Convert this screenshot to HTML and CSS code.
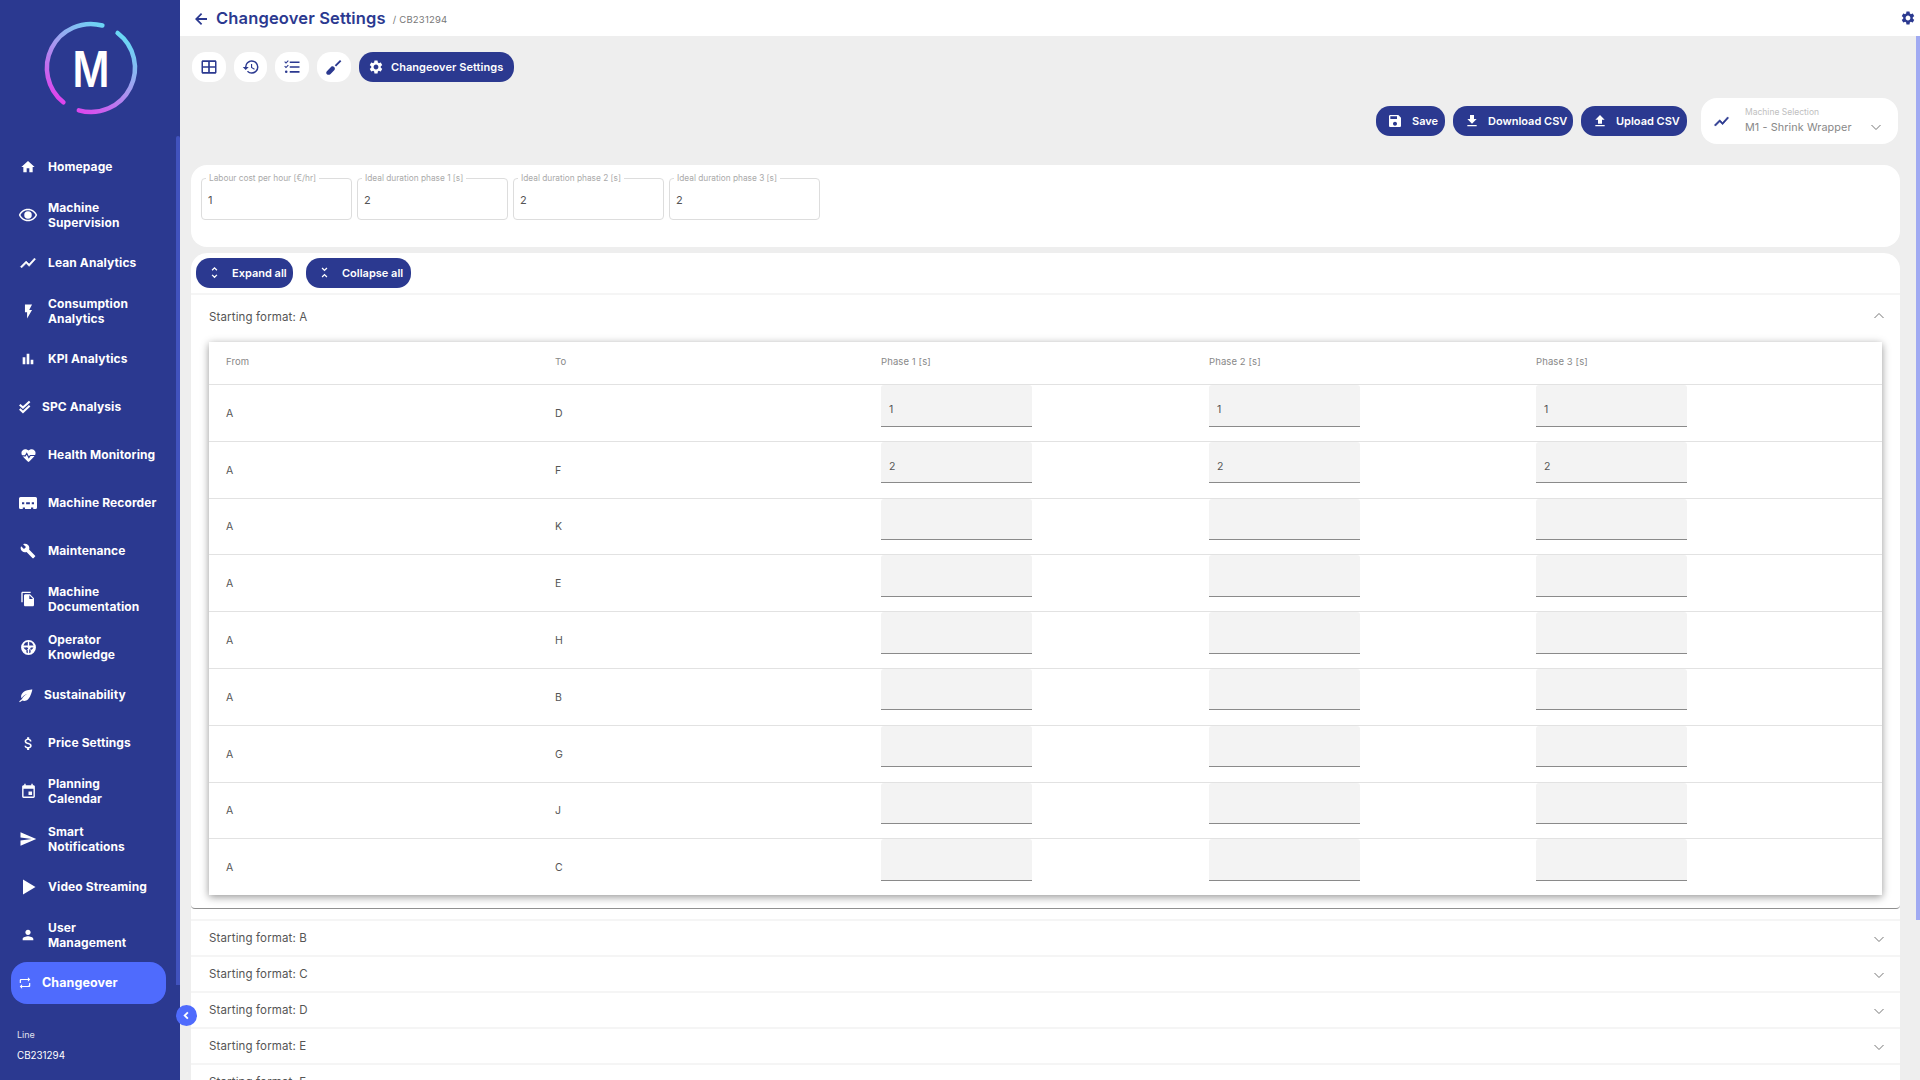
FILE: index.html
```html
<!DOCTYPE html>
<html lang="en">
<head>
<meta charset="utf-8">
<title>Changeover Settings</title>
<link rel="stylesheet" href="styles.css">
</head>
<body>
<svg class="defs" width="0" height="0" aria-hidden="true">
  <defs>
    <symbol id="i-home" viewBox="0 0 24 24"><path d="M10 20v-6h4v6h5v-8h3L12 3 2 12h3v8z"/></symbol>
    <symbol id="i-eye" viewBox="0 0 24 24"><path fill-rule="evenodd" d="M12 6.2c3.9 0 7.4 2.2 9.1 5.8-1.7 3.6-5.2 5.8-9.1 5.8S4.600 15.600 2.900 12C4.600 8.400 8.100 6.200 12 6.200zM12 4.500C7 4.500 2.730 7.610 1 12c1.730 4.390 6 7.500 11 7.500s9.270-3.110 11-7.500c-1.730-4.390-6-7.500-11-7.500zM12 7.500a4.500 4.500 0 1 0 0 9 4.500 4.500 0 0 0 0-9z"/></symbol>
    <symbol id="i-chart" viewBox="0 0 24 24"><path d="M3.500 18.490l6-6.010 4 4L22 6.920l-1.410-1.410-7.090 7.970-4-4L2 16.990z" stroke="currentColor" stroke-width="0.8"/></symbol>
    <symbol id="i-bolt" viewBox="0 0 24 24"><path d="M7 2v11h3v9l7-12h-4l4-8z"/></symbol>
    <symbol id="i-bars" viewBox="0 0 24 24"><path d="M4 9.200h4V20H4zM10 4h4v16h-4zm6 9h4v7h-4z"/></symbol>
    <symbol id="i-done" viewBox="0 0 24 24"><path class="chk" d="M3 8l5.500 5L20 2.500"/><path class="chk" d="M3 15.500l5.500 5L20 10"/></symbol>
    <symbol id="i-heart" viewBox="0 0 24 24"><path d="M12 21.350l-1.450-1.320C5.400 15.360 2 12.280 2 8.500 2 5.420 4.420 3 7.500 3c1.740 0 3.410.810 4.500 2.090C13.090 3.810 14.760 3 16.500 3 19.580 3 22 5.420 22 8.500c0 3.780-3.400 6.860-8.550 11.540L12 21.350z"/><path class="cut" d="M1 12.500h6.500l2-3.500 3 6 2-3h8"/></symbol>
    <symbol id="i-rec" viewBox="0 0 24 16"><path fill-rule="evenodd" d="M2 0h20a2 2 0 0 1 2 2v12a2 2 0 0 1-2 2h-3v-2h-3v2H8v-2H5v2H2a2 2 0 0 1-2-2V2a2 2 0 0 1 2-2zM4 7v2.500h3V7zm5.500 0v2.500h5V7zM17 7v2.500h3V7z"/></symbol>
    <symbol id="i-wrench" viewBox="0 0 24 24"><path d="M22.700 19l-9.100-9.100c.9-2.300.4-5-1.500-6.900-2-2-5-2.400-7.400-1.300L9 6 6 9 1.600 4.700C.4 7.100.9 10.100 2.900 12.100c1.900 1.900 4.600 2.400 6.900 1.500l9.100 9.100c.4.4 1 .4 1.400 0l2.300-2.300c.5-.4.5-1.100.1-1.400z"/></symbol>
    <symbol id="i-copy" viewBox="0 0 24 24"><path d="M16 1H4c-1.100 0-2 .9-2 2v14h2V3h12V1zm-1 4l6 6v10c0 1.100-.9 2-2 2H7.990C6.890 23 6 22.100 6 21l.01-14c0-1.100.89-2 1.990-2h7zm-1 7h5.500L14 6.500V12z"/></symbol>
    <symbol id="i-know" viewBox="0 0 24 24"><path fill-rule="evenodd" d="M12 1.500a10.500 10.500 0 1 0 0 21 10.500 10.500 0 0 0 0-21zM11 4v5H4.800A7.800 7.800 0 0 1 11 4zm2 0a7.800 7.800 0 0 1 6.200 5H13zM5 12h3.500a2 2 0 1 1 0 3.500A7.800 7.800 0 0 1 5 12zm10.500 0H19a7.800 7.800 0 0 1-3.500 3.500 2 2 0 0 1 0-3.500zM11 14v6a7.800 7.800 0 0 1-2-.8v-3zm2 0l2 2.200v3a7.800 7.800 0 0 1-2 .8z"/></symbol>
    <symbol id="i-leaf" viewBox="0 0 24 24"><path d="M8 7c-3.200 2.700-3.800 6.500-2.200 9.500 2-3.400 5.200-5.800 9.200-7.200-3.700 2-6.900 4.800-9 8.700L2 21l.8 1.600 4.200-2.500c3 1.200 6.700.5 9.200-2C20.500 14 23 2.500 23 2.500S12.500 3 8 7z"/></symbol>
    <symbol id="i-dollar" viewBox="0 0 24 24"><path d="M11.800 10.900c-2.270-.59-3-1.200-3-2.150 0-1.090 1.010-1.850 2.700-1.850 1.780 0 2.440.85 2.500 2.100h2.210c-.07-1.720-1.120-3.300-3.210-3.810V3h-3v2.160c-1.940.42-3.500 1.680-3.500 3.610 0 2.310 1.910 3.460 4.700 4.130 2.500.6 3 1.480 3 2.410 0 .69-.49 1.790-2.700 1.790-2.060 0-2.870-.92-2.980-2.100h-2.200c.12 2.190 1.760 3.420 3.680 3.830V21h3v-2.150c1.950-.37 3.500-1.500 3.500-3.550 0-2.840-2.430-3.810-4.700-4.400z"/></symbol>
    <symbol id="i-event" viewBox="0 0 24 24"><path d="M17 12h-5v5h5v-5zM16 1v2H8V1H6v2H5c-1.110 0-1.990.9-1.990 2L3 19c0 1.100.89 2 2 2h14c1.100 0 2-.9 2-2V5c0-1.100-.9-2-2-2h-1V1h-2zm3 18H5V8h14v11z"/></symbol>
    <symbol id="i-send" viewBox="0 0 24 24"><path d="M2.010 21L23 12 2.010 3 2 10l15 2-15 2z"/></symbol>
    <symbol id="i-play" viewBox="0 0 24 24"><path d="M6 3v18l15-9z"/></symbol>
    <symbol id="i-person" viewBox="0 0 24 24"><path d="M12 12c2.210 0 4-1.790 4-4s-1.790-4-4-4-4 1.790-4 4 1.790 4 4 4zm0 2c-2.670 0-8 1.340-8 4v2h16v-2c0-2.660-5.330-4-8-4z"/></symbol>
    <symbol id="i-repeat" viewBox="0 0 24 24"><path d="M7 7h10v3l4-4-4-4v3H5c-1 0-2 1-2 2v5h2V8c0-.6.4-1 1-1zm10 10H7v-3l-4 4 4 4v-3h12c1 0 2-1 2-2v-5h-2v3c0 1-1 2-2 2z"/></symbol>
    <symbol id="i-table" viewBox="0 0 24 24"><path fill-rule="evenodd" d="M4 3h16c1.100 0 2 .9 2 2v14c0 1.100-.9 2-2 2H4c-1.100 0-2-.9-2-2V5c0-1.100.9-2 2-2zm0 2.200V10.900h6.900V5.200zm9.100 0V10.900H20V5.200zM4 13.100V18.800h6.900V13.100zm9.100 0V18.800H20V13.100z"/></symbol>
    <symbol id="i-history" viewBox="0 0 24 24"><path d="M13 3a9 9 0 0 0-9 9H1l3.890 3.890.07.14L9 12H6c0-3.870 3.130-7 7-7s7 3.130 7 7-3.130 7-7 7c-1.930 0-3.680-.79-4.940-2.060l-1.420 1.420A8.954 8.954 0 0 0 13 21a9 9 0 0 0 0-18zm-1 5v5l4.280 2.540.72-1.210-3.500-2.080V8H12z"/></symbol>
    <symbol id="i-list" viewBox="0 0 24 24"><path d="M9 4.500h13v2.200H9zM9 10.900h13v2.200H9zM9 17.300h13v2.200H9zM4 7.600L1.700 5.300l1-1 1.300 1.300 2.600-2.600 1 1zM4 13.600L1.700 11.300l1-1 1.300 1.300 2.600-2.600 1 1z"/><circle cx="4.300" cy="18.400" r="1.700"/></symbol>
    <symbol id="i-driver" viewBox="0 0 24 24"><path d="M2.500 21.500c-1.300-1.300-1-3 .3-4.300l5.500-5.500c1-1 3-.7 4 .3s1.300 3 .3 4l-5.500 5.500c-1.300 1.300-3.300 1.300-4.600 0zM13 9.500l7-7 1.800 1.800-7 7z"/></symbol>
    <symbol id="i-gear" viewBox="0 0 24 24"><path d="M19.140 12.940c.04-.3.06-.61.06-.94 0-.32-.02-.64-.07-.94l2.030-1.580a.49.49 0 0 0 .12-.61l-1.920-3.320a.488.488 0 0 0-.59-.22l-2.390.96c-.5-.38-1.030-.7-1.620-.94l-.36-2.540a.484.484 0 0 0-.48-.41h-3.840c-.24 0-.43.17-.47.41l-.36 2.540c-.59.24-1.130.57-1.620.94l-2.390-.96c-.22-.08-.47 0-.59.22L2.740 8.870c-.12.21-.08.47.12.61l2.030 1.580c-.05.3-.09.63-.09.94s.02.64.07.94l-2.030 1.580a.49.49 0 0 0-.12.61l1.920 3.320c.12.22.37.29.59.22l2.390-.96c.5.38 1.030.7 1.620.94l.36 2.540c.05.24.24.41.48.41h3.840c.24 0 .44-.17.47-.41l.36-2.540c.59-.24 1.130-.56 1.620-.94l2.390.96c.22.08.47 0 .59-.22l1.920-3.320c.12-.22.07-.47-.12-.61l-2.010-1.580zM12 15.600c-1.980 0-3.600-1.620-3.600-3.600s1.620-3.600 3.600-3.600 3.600 1.620 3.600 3.600-1.620 3.600-3.600 3.600z"/></symbol>
    <symbol id="i-save" viewBox="0 0 24 24"><path d="M17 3H5c-1.110 0-2 .9-2 2v14c0 1.100.89 2 2 2h14c1.100 0 2-.9 2-2V7l-4-4zm-5 16c-1.660 0-3-1.340-3-3s1.340-3 3-3 3 1.340 3 3-1.340 3-3 3zm3-10H5V5h10v4z"/></symbol>
    <symbol id="i-down" viewBox="0 0 24 24"><path d="M19 9h-4V3H9v6H5l7 7 7-7zM5 18v2h14v-2H5z"/></symbol>
    <symbol id="i-up" viewBox="0 0 24 24"><path d="M9 16h6v-6h4l-7-7-7 7h4zm-4 2h14v2H5z"/></symbol>
    <symbol id="i-more" viewBox="0 0 24 24"><path d="M12 5.830L15.170 9l1.410-1.410L12 3 7.410 7.590 8.830 9 12 5.830zm0 12.340L8.830 15l-1.410 1.410L12 21l4.590-4.590L15.170 15 12 18.170z"/></symbol>
    <symbol id="i-less" viewBox="0 0 24 24"><path d="M7.410 18.590L8.830 20 12 16.830 15.170 20l1.410-1.410L12 14l-4.590 4.590zm9.180-13.180L15.170 4 12 7.170 8.830 4 7.410 5.410 12 10l4.590-4.590z"/></symbol>
    <symbol id="i-back" viewBox="0 0 24 24"><path d="M20 10.700H8.600l5-5L12 4l-8 8 8 8 1.600-1.700-5-5H20z"/></symbol>
    <symbol id="i-caret" viewBox="0 0 12 12"><path class="thin" d="M1.500 4l4.500 4.500L10.500 4"/></symbol>
    <symbol id="i-caret-up" viewBox="0 0 12 12"><path class="thin" d="M1.500 8L6 3.500 10.500 8"/></symbol>
    <linearGradient id="ring" gradientUnits="userSpaceOnUse" x1="80" y1="8" x2="25" y2="92">
      <stop offset="0" stop-color="#5fe3f6"/>
      <stop offset="0.5" stop-color="#a69af0"/>
      <stop offset="1" stop-color="#e23cec"/>
    </linearGradient>
  </defs>
</svg>

<div class="app">
  <aside class="sidebar">
    <div class="logo">
      <svg class="logo-mark" viewBox="0 0 100 100" width="100" height="100">
        <g class="logo-ring">
          <path d="M61.400 7.500A44 44 0 0 0 22.400 84.300"/>
          <path d="M76.600 15A44 44 0 0 1 37.800 92.300"/>
        </g>
        <text class="logo-letter" x="50" y="68.500" text-anchor="middle" textLength="37" lengthAdjust="spacingAndGlyphs">M</text>
      </svg>
    </div>
    <nav class="nav">
      <a class="nav-item"><span class="nav-icon"><svg class="ic-15"><use href="#i-home"/></svg></span><span class="nav-text">Homepage</span></a>
      <a class="nav-item"><span class="nav-icon"><svg class="ic-20"><use href="#i-eye"/></svg></span><span class="nav-text">Machine<br>Supervision</span></a>
      <a class="nav-item"><span class="nav-icon"><svg class="ic-18"><use href="#i-chart"/></svg></span><span class="nav-text">Lean Analytics</span></a>
      <a class="nav-item"><span class="nav-icon"><svg class="ic-16"><use href="#i-bolt"/></svg></span><span class="nav-text">Consumption<br>Analytics</span></a>
      <a class="nav-item"><span class="nav-icon"><svg class="ic-15"><use href="#i-bars"/></svg></span><span class="nav-text">KPI Analytics</span></a>
      <a class="nav-item nav-item-narrow"><span class="nav-icon"><svg class="ic-13"><use href="#i-done"/></svg></span><span class="nav-text">SPC Analysis</span></a>
      <a class="nav-item"><span class="nav-icon"><svg class="ic-16"><use href="#i-heart"/></svg></span><span class="nav-text">Health Monitoring</span></a>
      <a class="nav-item"><span class="nav-icon"><svg class="ic-rec"><use href="#i-rec"/></svg></span><span class="nav-text">Machine Recorder</span></a>
      <a class="nav-item"><span class="nav-icon"><svg class="ic-15"><use href="#i-wrench"/></svg></span><span class="nav-text">Maintenance</span></a>
      <a class="nav-item"><span class="nav-icon"><svg class="ic-15"><use href="#i-copy"/></svg></span><span class="nav-text">Machine<br>Documentation</span></a>
      <a class="nav-item"><span class="nav-icon"><svg class="ic-16"><use href="#i-know"/></svg></span><span class="nav-text">Operator<br>Knowledge</span></a>
      <a class="nav-item nav-item-mid"><span class="nav-icon"><svg class="ic-14"><use href="#i-leaf"/></svg></span><span class="nav-text">Sustainability</span></a>
      <a class="nav-item"><span class="nav-icon"><svg class="ic-16"><use href="#i-dollar"/></svg></span><span class="nav-text">Price Settings</span></a>
      <a class="nav-item"><span class="nav-icon"><svg class="ic-16"><use href="#i-event"/></svg></span><span class="nav-text">Planning<br>Calendar</span></a>
      <a class="nav-item"><span class="nav-icon"><svg class="ic-18"><use href="#i-send"/></svg></span><span class="nav-text">Smart<br>Notifications</span></a>
      <a class="nav-item"><span class="nav-icon"><svg class="ic-20"><use href="#i-play"/></svg></span><span class="nav-text">Video Streaming</span></a>
      <a class="nav-item"><span class="nav-icon"><svg class="ic-15"><use href="#i-person"/></svg></span><span class="nav-text">User<br>Management</span></a>
      <a class="nav-item nav-item-narrow nav-item-active"><span class="nav-icon"><svg class="ic-13"><use href="#i-repeat"/></svg></span><span class="nav-text">Changeover</span></a>
    </nav>
    <div class="line-info">
      <div class="line-label">Line</div>
      <div class="line-value">CB231294</div>
    </div>
    <div class="side-scroll"></div>
    <button class="collapse"><svg viewBox="0 0 12 12" width="11" height="11"><path class="thick" d="M7.500 2.500L4 6l3.500 3.500"/></svg></button>
  </aside>

  <main class="main">
    <header class="topbar">
      <svg class="back"><use href="#i-back"/></svg>
      <h1 class="title">Changeover Settings</h1>
      <span class="crumb">/ CB231294</span>
      <svg class="top-gear"><use href="#i-gear"/></svg>
    </header>
    <div class="content">
      <div class="tabs">
        <button class="tab tab-w34"><svg><use href="#i-table"/></svg></button>
        <button class="tab tab-w33"><svg><use href="#i-history"/></svg></button>
        <button class="tab tab-w34"><svg><use href="#i-list"/></svg></button>
        <button class="tab tab-w34"><svg><use href="#i-driver"/></svg></button>
        <button class="tab tab-active"><svg><use href="#i-gear"/></svg><span>Changeover Settings</span></button>
      </div>

      <div class="actions">
        <button class="btn btn-save"><svg><use href="#i-save"/></svg><span>Save</span></button>
        <button class="btn btn-down"><svg><use href="#i-down"/></svg><span>Download CSV</span></button>
        <button class="btn btn-upl"><svg><use href="#i-up"/></svg><span>Upload CSV</span></button>
        <div class="select">
          <svg class="select-icon"><use href="#i-chart"/></svg>
          <div class="select-body">
            <div class="select-label">Machine Selection</div>
            <div class="select-value">M1 - Shrink Wrapper</div>
          </div>
          <svg class="select-caret"><use href="#i-caret"/></svg>
        </div>
      </div>

      <section class="params">
        <div class="field"><span class="field-label">Labour cost per hour [€/hr]</span><span class="field-value">1</span></div>
        <div class="field"><span class="field-label">Ideal duration phase 1 [s]</span><span class="field-value">2</span></div>
        <div class="field"><span class="field-label">Ideal duration phase 2 [s]</span><span class="field-value">2</span></div>
        <div class="field"><span class="field-label">Ideal duration phase 3 [s]</span><span class="field-value">2</span></div>
      </section>

      <section class="formats">
        <div class="fold-actions">
          <button class="btn btn-expand"><svg><use href="#i-more"/></svg><span>Expand all</span></button>
          <button class="btn btn-collapse"><svg><use href="#i-less"/></svg><span>Collapse all</span></button>
        </div>

        <div class="acc acc-open">
          <div class="acc-head acc-head-open"><span>Starting format: A</span><svg class="acc-caret"><use href="#i-caret-up"/></svg></div>
          <div class="sheet">
            <div class="row row-head"><div>From</div><div>To</div><div>Phase 1 [s]</div><div>Phase 2 [s]</div><div>Phase 3 [s]</div></div>
            <div class="row"><div class="cell">A</div><div class="cell">D</div><div class="inp">1</div><div class="inp">1</div><div class="inp">1</div></div>
            <div class="row"><div class="cell">A</div><div class="cell">F</div><div class="inp">2</div><div class="inp">2</div><div class="inp">2</div></div>
            <div class="row"><div class="cell">A</div><div class="cell">K</div><div class="inp"></div><div class="inp"></div><div class="inp"></div></div>
            <div class="row"><div class="cell">A</div><div class="cell">E</div><div class="inp"></div><div class="inp"></div><div class="inp"></div></div>
            <div class="row"><div class="cell">A</div><div class="cell">H</div><div class="inp"></div><div class="inp"></div><div class="inp"></div></div>
            <div class="row"><div class="cell">A</div><div class="cell">B</div><div class="inp"></div><div class="inp"></div><div class="inp"></div></div>
            <div class="row"><div class="cell">A</div><div class="cell">G</div><div class="inp"></div><div class="inp"></div><div class="inp"></div></div>
            <div class="row"><div class="cell">A</div><div class="cell">J</div><div class="inp"></div><div class="inp"></div><div class="inp"></div></div>
            <div class="row"><div class="cell">A</div><div class="cell">C</div><div class="inp"></div><div class="inp"></div><div class="inp"></div></div>
          </div>
        </div>

        <div class="acc-head"><span>Starting format: B</span><svg class="acc-caret"><use href="#i-caret"/></svg></div>
        <div class="acc-head"><span>Starting format: C</span><svg class="acc-caret"><use href="#i-caret"/></svg></div>
        <div class="acc-head"><span>Starting format: D</span><svg class="acc-caret"><use href="#i-caret"/></svg></div>
        <div class="acc-head"><span>Starting format: E</span><svg class="acc-caret"><use href="#i-caret"/></svg></div>
        <div class="acc-head"><span>Starting format: F</span><svg class="acc-caret"><use href="#i-caret"/></svg></div>
      </section>
    </div>
    <div class="main-scroll"></div>
  </main>
</div>
</body>
</html>
```

FILE: styles.css
```css
* { box-sizing: border-box; }
html, body { margin: 0; height: 100%; overflow: hidden; }
body { font-family: Inter, "Noto Sans", "Liberation Sans", sans-serif; background: #eeeeee; color: #555; }
button { font-family: inherit; border: 0; padding: 0; cursor: pointer; }
svg { fill: currentColor; }
.defs { position: absolute; }
.cut { fill: none; stroke: #2b3990; stroke-width: 1.6; }
.thin { fill: none; stroke: currentColor; stroke-width: 1; }
.thick { fill: none; stroke: #fff; stroke-width: 2; }
.chk { fill: none; stroke: currentColor; stroke-width: 3.6; }

.app { display: flex; height: 1080px; }

/* sidebar */
.sidebar { position: relative; z-index: 2; flex: 0 0 180px; background: #2b3990; color: #fff; display: flex; flex-direction: column; }
.logo { height: 146px; padding: 17.5px 0 0 40.5px; }
.logo-mark { display: block; overflow: visible; }
.logo-ring path { fill: none; stroke: url(#ring); stroke-width: 4.5; stroke-linecap: round; }
.logo-letter { font-family: Inter, sans-serif; font-weight: 600; font-size: 50px; fill: #fff; }
.nav { display: flex; flex-direction: column; gap: 6px; padding-left: 11px; }
.nav-item { display: flex; align-items: center; gap: 10px; width: 155px; height: 42px; padding-left: 7px; border-radius: 16px; }
.nav-icon { flex: 0 0 20px; display: flex; align-items: center; justify-content: center; }
.nav-item-narrow { gap: 10px; }
.nav-item-narrow .nav-icon { flex-basis: 14px; }
.nav-item-mid { gap: 11px; }
.nav-item-mid .nav-icon { flex-basis: 15px; }
.nav-item-active { background: #4f6bfd; }
.nav-text { font-size: 12px; font-weight: 700; line-height: 15px; letter-spacing: 0.1px; white-space: nowrap; margin-top: -1px; }
.nav-item-active .nav-text { font-size: 12.5px; }
.ic-13 { width: 14px; height: 14px; }
.ic-14 { width: 15px; height: 15px; }
.ic-15 { width: 16px; height: 16px; }
.ic-16 { width: 17px; height: 17px; }
.ic-18 { width: 18px; height: 18px; }
.ic-20 { width: 20px; height: 20px; }
.ic-rec { width: 18px; height: 12px; }
.line-info { padding: 25px 0 0 17px; }
.line-label { font-size: 9px; line-height: 12px; opacity: 0.85; }
.line-value { font-size: 9.8px; line-height: 14px; margin-top: 8px; }
.side-scroll { position: absolute; left: 176px; top: 136px; width: 4px; height: 849px; background: #4152bd; border-radius: 2px 2px 0 0; }
.collapse { position: absolute; left: 175.500px; top: 1004.500px; width: 21px; height: 21px; border-radius: 50%; background: #4f6bfd; display: flex; align-items: center; justify-content: center; }

/* main */
.main { position: relative; flex: 1; min-width: 0; height: 1080px; overflow: hidden; display: flex; flex-direction: column; }
.topbar { flex: 0 0 36px; height: 36px; background: #fff; display: flex; align-items: center; padding-left: 12px; color: #2b3990; position: relative; z-index: 1; }
.back { width: 18px; height: 18px; margin-top: 2px; }
.title { font-size: 16.5px; font-weight: 600; margin: 0 0 0 6px; line-height: 20px; letter-spacing: 0.15px; }
.crumb { font-size: 9.500px; color: #777; margin-left: 7px; margin-top: 2px; letter-spacing: 0.2px; }
.top-gear { width: 16px; height: 16px; margin-left: auto; margin-right: 4px; }
.content { padding: 16px 20px 0 11px; }

.tabs { display: flex; gap: 8px; padding-left: 1px; height: 30px; }
.tab { height: 30px; background: #fff; color: #2b3990; border-radius: 14px; display: flex; align-items: center; justify-content: center; }
.tab svg { width: 18px; height: 18px; }
.tab-w34 { width: 34px; }
.tab-w33 { width: 33px; }
.tab-active { width: 155px; background: #2b3990; color: #fff; justify-content: flex-start; padding-left: 9px; gap: 7px; }
.tab-active svg { width: 16px; height: 16px; }
.tab-active span { font-size: 11px; font-weight: 600; white-space: nowrap; margin-top: -1px; letter-spacing: 0.05px; }

.actions { display: flex; align-items: center; justify-content: flex-end; gap: 8px; margin-top: 16px; height: 46px; padding-right: 2px; }
.btn { height: 30px; background: #2b3990; color: #fff; border-radius: 14px; display: flex; align-items: center; font-size: 11px; font-weight: 600; white-space: nowrap; }
.btn span { margin-top: -1px; }
.btn svg { width: 16px; height: 16px; flex: none; margin-top: -1px; }
.btn-save { width: 69px; padding-left: 11px; gap: 9px; }
.btn-down { width: 120px; padding-left: 11px; gap: 8px; }
.btn-upl { width: 106px; padding-left: 11px; gap: 8px; }
.select { width: 197px; height: 46px; margin-left: 6px; background: #fff; border-radius: 16px; display: flex; align-items: center; padding: 0 16px 0 12px; color: #2b3990; }
.select-icon { width: 17px; height: 17px; flex: none; }
.select-body { flex: 1; margin-left: 15px; }
.select-label { font-size: 8.5px; line-height: 11px; color: #c0c0c0; }
.select-value { font-size: 10.8px; line-height: 15px; color: #888; letter-spacing: 0.1px; margin-top: 2px; }
.select-caret { width: 12px; height: 12px; color: #777; margin-top: 11px; }

.params { margin-top: 21px; height: 82px; background: #fff; border-radius: 16px; display: flex; gap: 5px; padding: 13px 0 0 10px; }
.field { position: relative; width: 151px; height: 42px; border: 1px solid #ddd; border-radius: 4px; padding: 0 6px; display: flex; align-items: center; }
.field-label { position: absolute; left: 4px; top: -6px; padding: 0 3px; background: #fff; font-size: 8.3px; line-height: 11px; color: #aaa; white-space: nowrap; }
.field-value { font-size: 11px; color: #555; margin-top: 2px; }

.formats { margin-top: 6px; background: #fff; border-radius: 16px 16px 0 0; padding-top: 5px; }
.fold-actions { display: flex; gap: 13px; padding-left: 5px; height: 30px; margin-bottom: 5px; }
.btn-expand { width: 97px; padding-left: 11px; gap: 10px; }
.btn-collapse { width: 105px; padding-left: 11px; gap: 10px; }
.btn-expand svg, .btn-collapse svg { width: 15px; height: 15px; }

.acc-open { padding-bottom: 13px; border-bottom: 1.5px solid #909090; border-radius: 0 0 4px 4px; margin-bottom: 9.5px; }
.acc-head { height: 36px; border-top: 2px solid #f5f5f5; display: flex; align-items: center; justify-content: space-between; padding: 0 15px 0 18px; font-size: 11.5px; color: #555; letter-spacing: 0.14px; }
.acc-head span { margin-top: 1px; }
.acc-head-open { height: 49px; padding-bottom: 4px; }
.acc-caret { width: 12px; height: 12px; color: #777; margin-top: 3px; }
.acc-head-open .acc-caret { margin-top: -2px; }

.sheet { margin: 0 18px; background: #fff; box-shadow: 0 2px 8px rgba(0,0,0,0.42); }
.row { display: grid; grid-template-columns: 329px 326px 328px 327px 1fr; height: 56.8px; padding-left: 17px; border-top: 1.2px solid #e2e2e2; font-size: 10.5px; color: #555; }
.row-head { height: 42px; border-top: 0; font-size: 9.5px; color: #888; align-items: center; letter-spacing: 0.1px; padding-bottom: 4px; }
.cell { align-self: center; margin-top: 1px; }
.inp { width: 151px; height: 41.5px; background: #f3f3f3; border-bottom: 1.3px solid #8a8a8a; border-radius: 3px 3px 0 0; padding: 18px 0 0 8px; line-height: 14px; font-size: 10.5px; }

.main-scroll { position: absolute; right: 0; top: 36px; width: 4px; height: 884px; background: #a0aaf2; }
```
